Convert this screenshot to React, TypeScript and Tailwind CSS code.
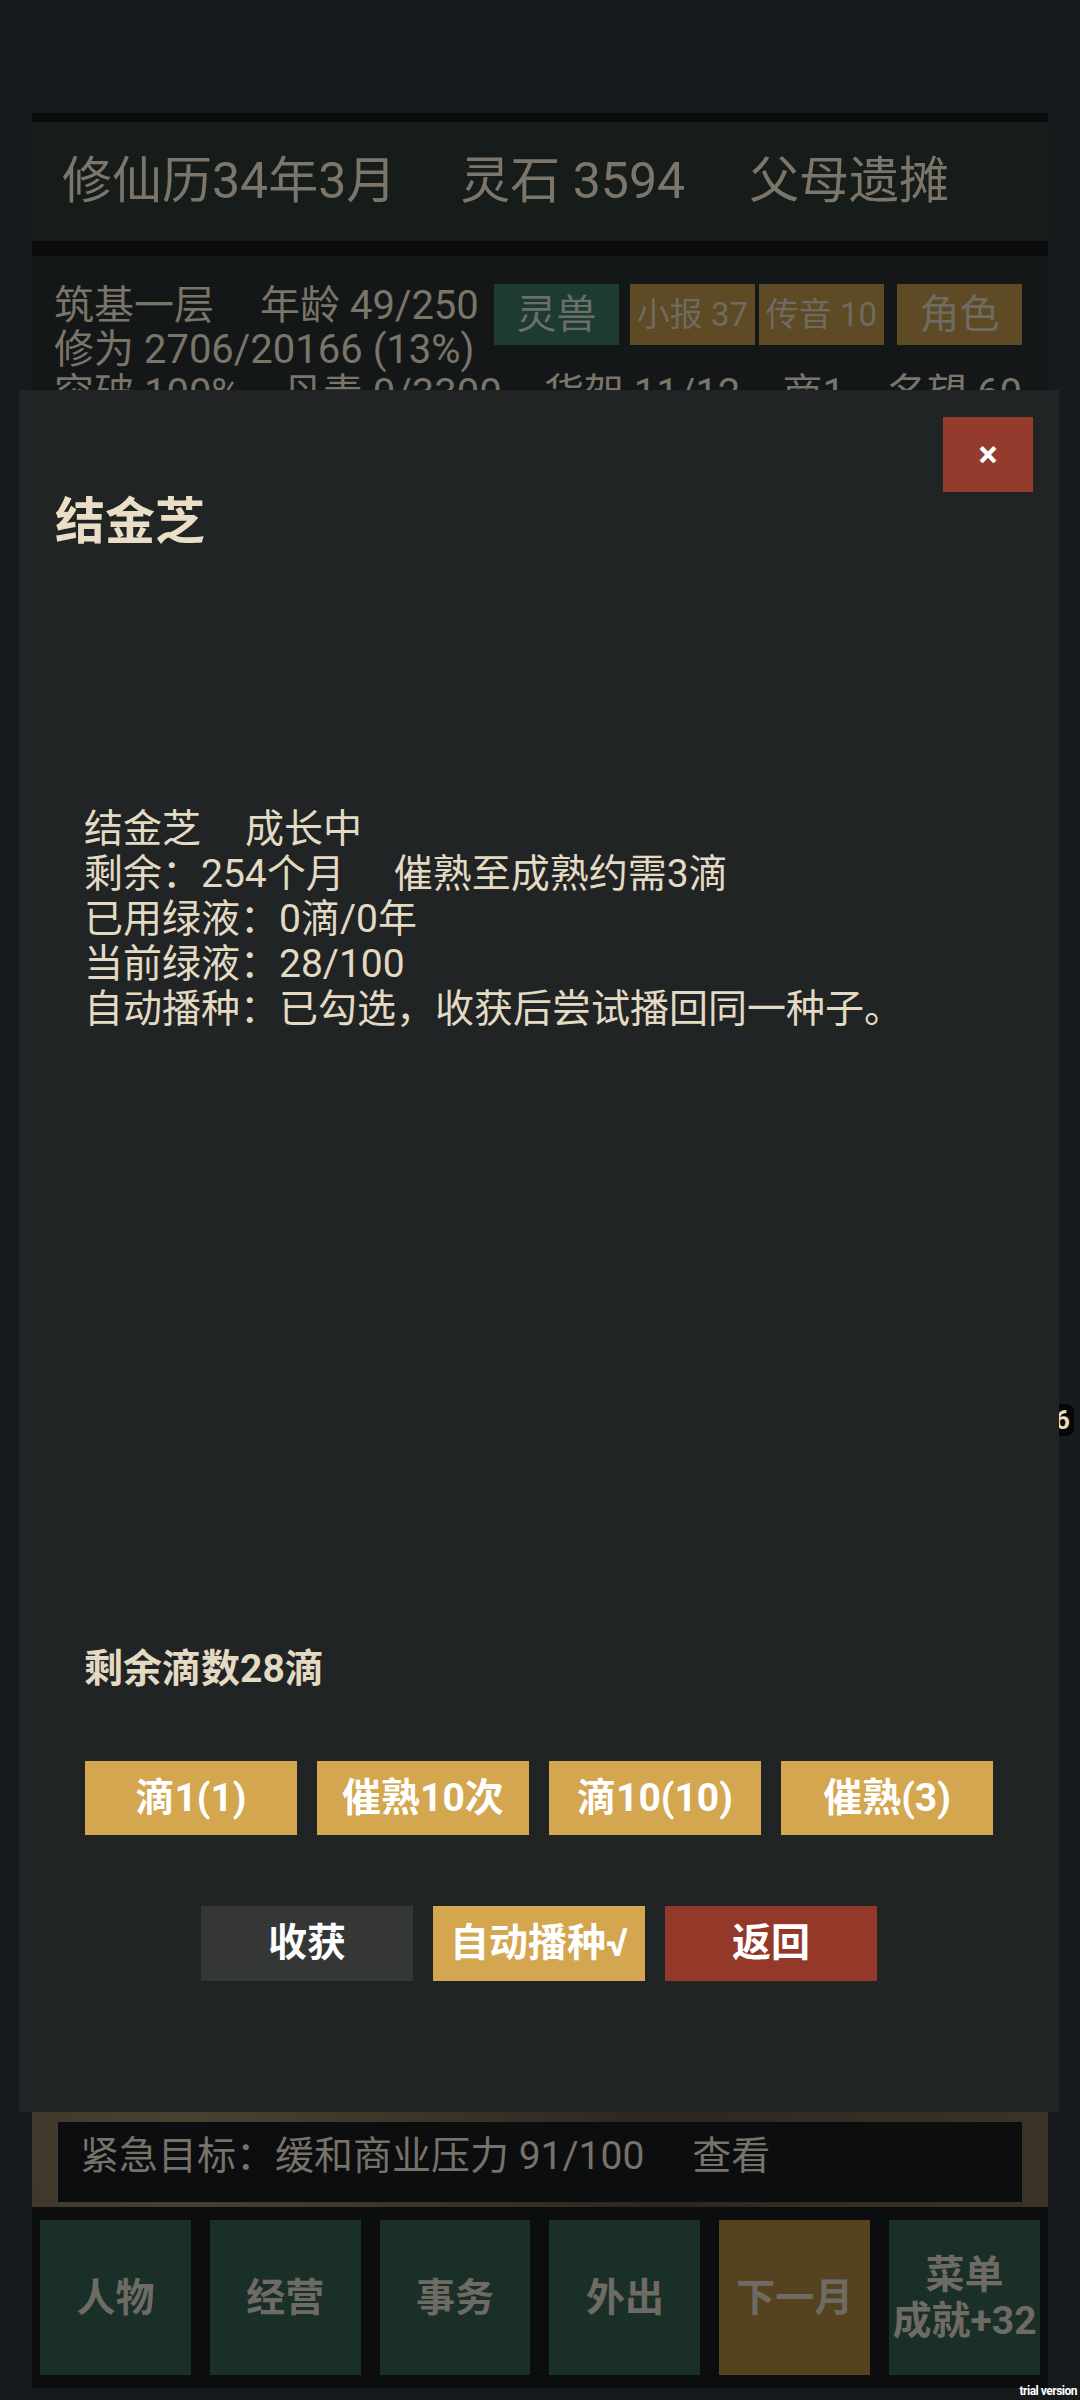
import React from "react";

const stats = ["突破 100%", "丹毒 0/3300", "货架 11/12", "商1", "名望 60"];
const dripButtons = ["滴1(1)", "催熟10次", "滴10(10)", "催熟(3)"];
const navItems = [
  { label: ["人物"], active: false },
  { label: ["经营"], active: false },
  { label: ["事务"], active: false },
  { label: ["外出"], active: false },
  { label: ["下一月"], active: true },
  { label: ["菜单", "成就+32"], active: false },
];

function Gap({ w }: { w: string }) {
  return <span className={`inline-block ${w}`} />;
}

function HerbModal() {
  return (
    <div className="absolute left-[19px] top-[390px] z-20 flex h-[1722px] w-[1040px] flex-col bg-[#202425]">
      <div className="flex justify-end pr-[26px] pt-[27px]">
        <button
          type="button"
          className="flex h-[75px] w-[90px] items-center justify-center bg-[#953b2e] text-[36px] font-bold text-white"
        >
          ×
        </button>
      </div>
      <h2 className="pl-[36px] text-[50px] font-bold leading-[60px] text-[#eadfc6]">结金芝</h2>

      <div className="mt-[255px] pl-[65px] text-[39px] leading-[45px] text-[#e4dac3]">
        <p>
          结金芝
          <Gap w="w-[44px]" />
          成长中
        </p>
        <p>
          剩余：254个月
          <Gap w="w-[49px]" />
          催熟至成熟约需3滴
        </p>
        <p>已用绿液：0滴/0年</p>
        <p>当前绿液：28/100</p>
        <p>自动播种：已勾选，收获后尝试播回同一种子。</p>
      </div>

      <p className="mt-[615px] pl-[65px] text-[39px] font-bold leading-[45px] text-[#e4dac3]">剩余滴数28滴</p>

      <div className="mt-[69px] flex justify-center gap-[20px]">
        {dripButtons.map((label) => (
          <button
            key={label}
            type="button"
            className="flex h-[74px] w-[212px] items-center justify-center bg-[#d4a64f] text-[39px] font-bold text-white"
          >
            {label}
          </button>
        ))}
      </div>

      <div className="mt-[71px] flex justify-center gap-[20px]">
        <button type="button" className="flex h-[75px] w-[212px] items-center justify-center bg-[#353636] text-[39px] font-bold text-white">
          收获
        </button>
        <button type="button" className="flex h-[75px] w-[212px] items-center justify-center bg-[#d4a64f] text-[39px] font-bold text-white">
          自动播种√
        </button>
        <button type="button" className="flex h-[75px] w-[212px] items-center justify-center bg-[#943829] text-[39px] font-bold text-white">
          返回
        </button>
      </div>
    </div>
  );
}

export default function App() {
  return (
    <div className="relative h-[2400px] w-[1080px] overflow-hidden bg-[#161a1d] font-['Roboto','Noto_Sans_CJK_SC',sans-serif]">
      <div className="px-[32px] pt-[113px]">
        {/* top bar */}
        <div className="flex h-[128px] items-center gap-[64px] border-t-[9px] border-[#0a0c0d] bg-[#161c1a] px-[30px] text-[50px] text-[#7c766a]">
          <span>修仙历34年3月</span>
          <span>灵石 3594</span>
          <span>父母遗摊</span>
        </div>
        <div className="h-[15px] bg-[#0a0c0d]" />

        {/* status panel, mostly behind the dialog */}
        <div className="h-[1844px] bg-[#141718] pl-[22px] pr-[26px] pt-[28px] text-[40px] leading-[44px] text-[#7a7469]">
          <div className="flex">
            <div className="w-[440px]">
              <p>
                筑基一层
                <Gap w="w-[46px]" />
                年龄 49/250
              </p>
              <p>修为 2706/20166 (13%)</p>
            </div>
            <div className="flex h-[61px] items-stretch">
              <span className="flex w-[125px] items-center justify-center bg-[#1d3b31] text-[40px] text-[#6b6f69]">灵兽</span>
              <span className="ml-[11px] flex w-[125px] items-center justify-center bg-[#5e4a24] text-[33px] text-[#6e6b62]">小报 37</span>
              <span className="ml-[4px] flex w-[125px] items-center justify-center bg-[#5e4a24] text-[33px] text-[#6e6b62]">传音 10</span>
              <span className="ml-[13px] flex w-[125px] items-center justify-center bg-[#5e4a24] text-[40px] text-[#6e6b62]">角色</span>
            </div>
          </div>
          <div className="flex justify-between">
            {stats.map((s) => (
              <span key={s}>{s}</span>
            ))}
          </div>
        </div>

        {/* urgent goal */}
        <div className="bg-[radial-gradient(circle_at_15%_40%,#4a4131_0,#2c271f_55%,#3a3326_100%)] px-[26px] pb-[5px] pt-[22px]">
          <div className="h-[80px] bg-[#0b0d0e] pl-[22px] pt-[12px] text-[39px] leading-[45px] text-[#77726a]">
            紧急目标：缓和商业压力 91/100
            <Gap w="w-[48px]" />
            查看
          </div>
        </div>

        {/* bottom nav */}
        <div className="flex gap-[19px] bg-[#0b0d0e] px-[8px] py-[13px]">
          {navItems.map((item) => (
            <div
              key={item.label.join()}
              className={`flex h-[155px] flex-1 flex-col items-center justify-center text-[39px] font-bold leading-[46px] text-[#6e6b64] ${
                item.active ? "bg-[#56421f]" : "bg-[#1b2f29]"
              }`}
            >
              {item.label.map((l) => (
                <span key={l}>{l}</span>
              ))}
            </div>
          ))}
        </div>
      </div>

      {/* badge peeking out from under the dialog */}
      <span className="absolute left-[1036px] top-[1404px] z-10 rounded-[8px] bg-[#050607] px-[4px] text-[26px] font-bold leading-[32px] text-[#e8dcc0]">
        36
      </span>

      <HerbModal />

      <span className="absolute bottom-[3px] right-[3px] z-30 text-[12px] font-bold leading-none tracking-[-0.5px] text-white">
        trial version
      </span>
    </div>
  );
}
